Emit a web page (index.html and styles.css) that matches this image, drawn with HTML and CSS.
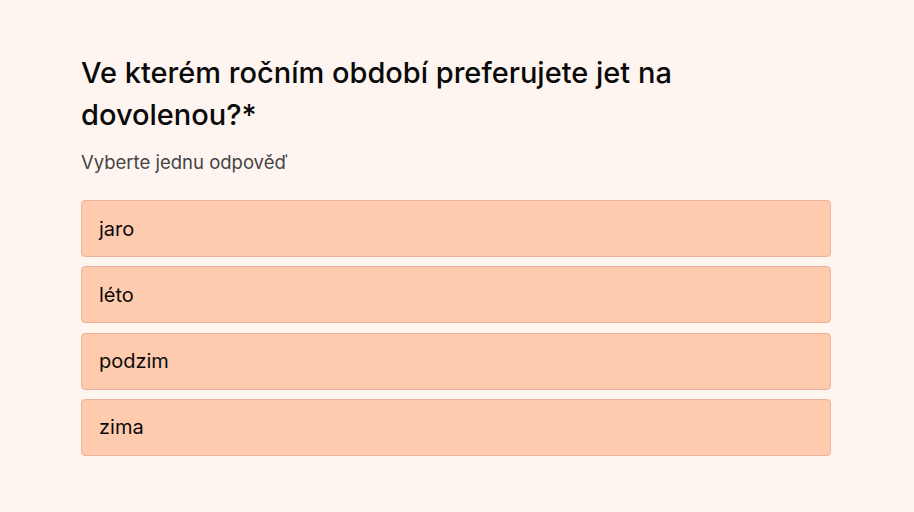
FILE: index.html
```html
<!DOCTYPE html>
<html lang="cs">
<head>
<meta charset="utf-8">
<link rel="stylesheet" href="styles.css">
</head>
<body>
<main class="question">
  <h1 class="title">Ve kterém ročním období preferujete jet na dovolenou?*</h1>
  <p class="hint">Vyberte jednu odpověď</p>
  <div class="options">
    <div class="option">jaro</div>
    <div class="option">léto</div>
    <div class="option">podzim</div>
    <div class="option">zima</div>
  </div>
</main>
</body>
</html>
```
FILE: styles.css
```css
html, body {
  margin: 0;
  padding: 0;
  background: #fef5f0;
  font-family: Inter, "Liberation Sans", sans-serif;
  color: #0a0a0a;
}
.question {
  width: 750px;
  padding: 52px 0 0 81px;
}
.title {
  margin: 0;
  font-size: 29px;
  font-weight: 500;
  line-height: 42px;
  width: 660px;
}
.hint {
  margin: 14px 0 0;
  font-size: 18.5px;
  line-height: 24px;
  color: #444;
}
.options {
  margin-top: 26px;
  display: flex;
  flex-direction: column;
  gap: 9.33px;
}
.option {
  height: 55px;
  box-sizing: content-box;
  border: 1px solid #eeb298;
  border-radius: 4px;
  background: #ffcbae;
  padding: 0 17px;
  display: flex;
  align-items: center;
  font-size: 20px;
}
```
